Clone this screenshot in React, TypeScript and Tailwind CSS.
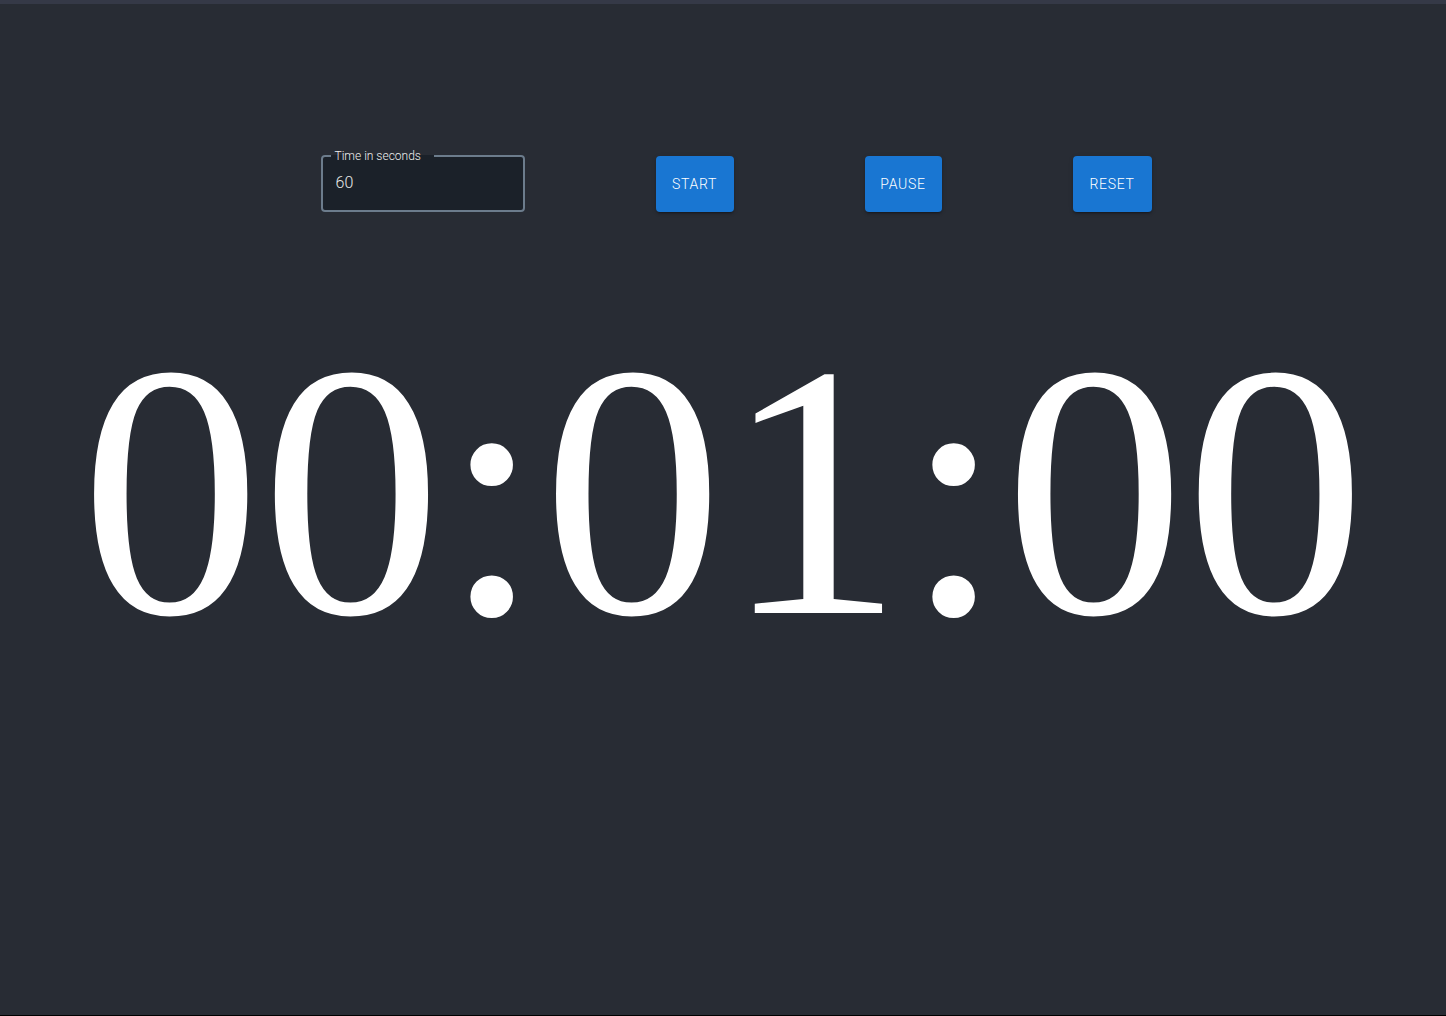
import React, { useEffect, useRef, useState } from 'react';

const pad = (n: number) => String(n).padStart(2, '0');

const formatTime = (total: number) => {
  const h = Math.floor(total / 3600);
  const m = Math.floor((total % 3600) / 60);
  const s = total % 60;
  return `${pad(h)}:${pad(m)}:${pad(s)}`;
};

const TimerButton = ({ label, width, onClick }: { label: string, width: string, onClick: () => void }) => (
  <button
    onClick={onClick}
    className={`${width} h-[56px] rounded-[4px] bg-[#1976d2] hover:bg-[#1565c0] text-white text-[14px] font-light tracking-[0.05em] uppercase shadow-[0_3px_1px_-2px_rgba(0,0,0,0.2),0_2px_2px_0_rgba(0,0,0,0.14),0_1px_5px_0_rgba(0,0,0,0.12)]`}
    style={{ fontFamily: 'Roboto, "Noto Sans", sans-serif' }}
  >
    {label}
  </button>
);

export default function App() {
  const [seconds, setSeconds] = useState('60');
  const [remaining, setRemaining] = useState(60);
  const [running, setRunning] = useState(false);
  const timer = useRef<number | null>(null);

  useEffect(() => {
    if (!running) return;
    timer.current = window.setInterval(() => {
      setRemaining(r => {
        if (r <= 1) {
          setRunning(false);
          return 0;
        }
        return r - 1;
      });
    }, 1000);
    return () => {
      if (timer.current) window.clearInterval(timer.current);
    };
  }, [running]);

  const onChange = (v: string) => {
    setSeconds(v);
    const n = parseInt(v, 10);
    if (!running) setRemaining(isNaN(n) ? 0 : n);
  };

  const reset = () => {
    setRunning(false);
    const n = parseInt(seconds, 10);
    setRemaining(isNaN(n) ? 0 : n);
  };

  return (
    <div className="min-h-[1016px] bg-[#282c34] flex flex-col border-t-[4px] border-[#353947] border-b border-b-black">
      {/* Controls */}
      <div className="flex items-end justify-center gap-[131px] pl-[26px] pt-[146px]">
        <fieldset
          className="w-[204px] h-[62px] rounded-[4px] border-2 border-[#6c7c8c] bg-[#1b2129] px-[8px] m-0"
          style={{ fontFamily: 'Roboto, "Noto Sans", sans-serif' }}
        >
          <legend className="pl-[4px] pr-[13px] text-[12px] leading-[12px] text-[#f0f0f0] font-light">Time in seconds</legend>
          <input
            value={seconds}
            onChange={e => onChange(e.target.value)}
            className="w-full bg-transparent outline-none text-[16px] text-[#e8e8e8] font-light mt-[9px] px-[5px]"
          />
        </fieldset>
        <TimerButton label="Start" width="w-[78px]" onClick={() => setRunning(true)} />
        <TimerButton label="Pause" width="w-[77px]" onClick={() => setRunning(false)} />
        <TimerButton label="Reset" width="w-[79px]" onClick={reset} />
      </div>

      {/* Display */}
      <div
        className="mt-[99px] text-center text-white text-[25vw] leading-none whitespace-nowrap"
        style={{ fontFamily: '"Liberation Serif", "Times New Roman", serif' }}
      >
        {formatTime(remaining)}
      </div>
    </div>
  );
}
